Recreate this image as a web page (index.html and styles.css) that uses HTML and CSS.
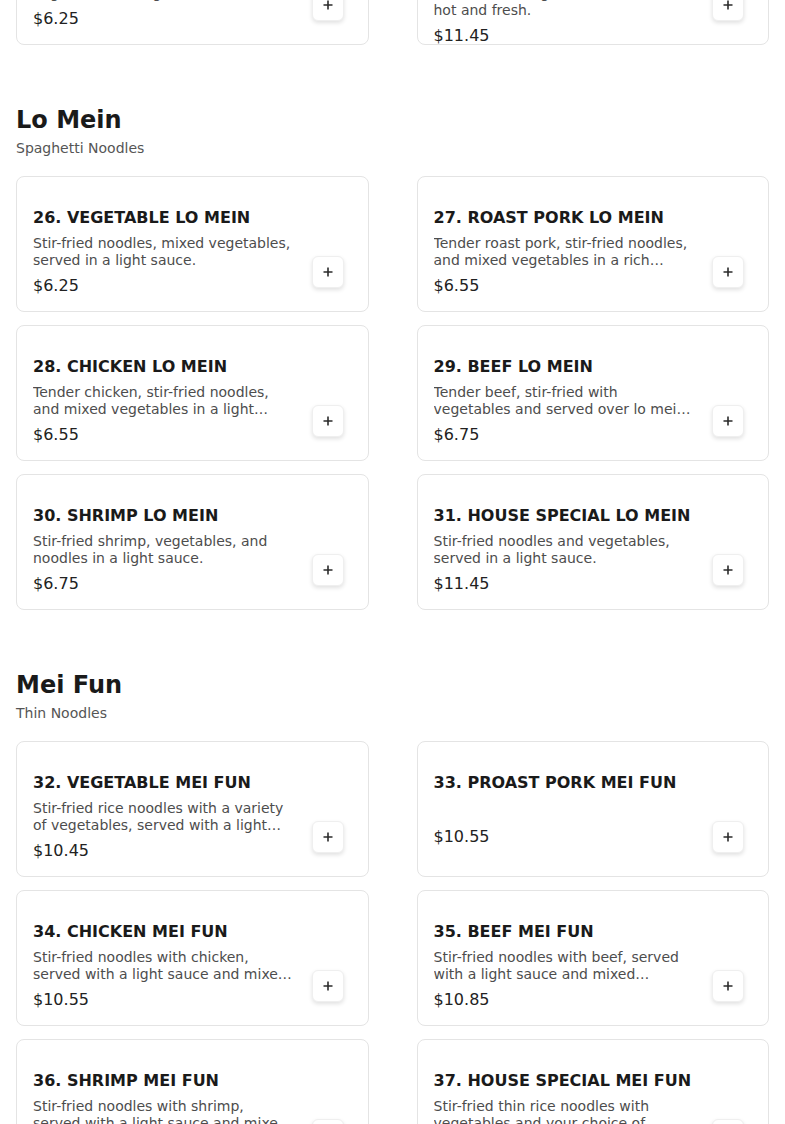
FILE: index.html
```html
<!DOCTYPE html>
<html lang="en">
<head>
<meta charset="utf-8">
<title>Menu</title>
<link rel="stylesheet" href="styles.css">
</head>
<body>
<main class="menu">
  <section class="section section--cut">
    <div class="grid">
      <article class="card">
        <div class="info">
          <h3 class="title">24. VEGETABLE CHOW MEIN</h3>
          <p class="desc">Crispy noodles with mixed vegetables in a light brown sauce.</p>
          <p class="price">$6.25</p>
        </div>
        <button class="add" aria-label="Add"><svg viewBox="0 0 10 10" width="10" height="10"><path d="M5 0.5v9M0.5 5h9" stroke="#2b2b2b" stroke-width="1.6" fill="none"/></svg></button>
      </article>
      <article class="card">
        <div class="info">
          <h3 class="title">25. HOUSE SPECIAL</h3>
          <p class="desc desc--long">Chicken, shrimp and roast pork with noodles and vegetables, all served hot and fresh.</p>
          <p class="price">$11.45</p>
        </div>
        <button class="add" aria-label="Add"><svg viewBox="0 0 10 10" width="10" height="10"><path d="M5 0.5v9M0.5 5h9" stroke="#2b2b2b" stroke-width="1.6" fill="none"/></svg></button>
      </article>
    </div>
  </section>

  <section class="section">
    <h2 class="section-title">Lo Mein</h2>
    <p class="section-sub">Spaghetti Noodles</p>
    <div class="grid">
      <article class="card">
        <div class="info">
          <h3 class="title">26. VEGETABLE LO MEIN</h3>
          <p class="desc">Stir-fried noodles, mixed vegetables, served in a light sauce.</p>
          <p class="price">$6.25</p>
        </div>
        <button class="add" aria-label="Add"><svg viewBox="0 0 10 10" width="10" height="10"><path d="M5 0.5v9M0.5 5h9" stroke="#2b2b2b" stroke-width="1.6" fill="none"/></svg></button>
      </article>
      <article class="card">
        <div class="info">
          <h3 class="title">27. ROAST PORK LO MEIN</h3>
          <p class="desc">Tender roast pork, stir-fried noodles, and mixed vegetables in a rich savory brown sauce.</p>
          <p class="price">$6.55</p>
        </div>
        <button class="add" aria-label="Add"><svg viewBox="0 0 10 10" width="10" height="10"><path d="M5 0.5v9M0.5 5h9" stroke="#2b2b2b" stroke-width="1.6" fill="none"/></svg></button>
      </article>
      <article class="card">
        <div class="info">
          <h3 class="title">28. CHICKEN LO MEIN</h3>
          <p class="desc">Tender chicken, stir-fried noodles, and mixed vegetables in a light sauce.</p>
          <p class="price">$6.55</p>
        </div>
        <button class="add" aria-label="Add"><svg viewBox="0 0 10 10" width="10" height="10"><path d="M5 0.5v9M0.5 5h9" stroke="#2b2b2b" stroke-width="1.6" fill="none"/></svg></button>
      </article>
      <article class="card">
        <div class="info">
          <h3 class="title">29. BEEF LO MEIN</h3>
          <p class="desc">Tender beef, stir-fried with vegetables and served over lo mein noodles.</p>
          <p class="price">$6.75</p>
        </div>
        <button class="add" aria-label="Add"><svg viewBox="0 0 10 10" width="10" height="10"><path d="M5 0.5v9M0.5 5h9" stroke="#2b2b2b" stroke-width="1.6" fill="none"/></svg></button>
      </article>
      <article class="card">
        <div class="info">
          <h3 class="title">30. SHRIMP LO MEIN</h3>
          <p class="desc">Stir-fried shrimp, vegetables, and noodles in a light sauce.</p>
          <p class="price">$6.75</p>
        </div>
        <button class="add" aria-label="Add"><svg viewBox="0 0 10 10" width="10" height="10"><path d="M5 0.5v9M0.5 5h9" stroke="#2b2b2b" stroke-width="1.6" fill="none"/></svg></button>
      </article>
      <article class="card">
        <div class="info">
          <h3 class="title">31. HOUSE SPECIAL LO MEIN</h3>
          <p class="desc">Stir-fried noodles and vegetables, served in a light sauce.</p>
          <p class="price">$11.45</p>
        </div>
        <button class="add" aria-label="Add"><svg viewBox="0 0 10 10" width="10" height="10"><path d="M5 0.5v9M0.5 5h9" stroke="#2b2b2b" stroke-width="1.6" fill="none"/></svg></button>
      </article>
    </div>
  </section>

  <section class="section">
    <h2 class="section-title">Mei Fun</h2>
    <p class="section-sub">Thin Noodles</p>
    <div class="grid">
      <article class="card">
        <div class="info">
          <h3 class="title">32. VEGETABLE MEI FUN</h3>
          <p class="desc">Stir-fried rice noodles with a variety of vegetables, served with a light sauce.</p>
          <p class="price">$10.45</p>
        </div>
        <button class="add" aria-label="Add"><svg viewBox="0 0 10 10" width="10" height="10"><path d="M5 0.5v9M0.5 5h9" stroke="#2b2b2b" stroke-width="1.6" fill="none"/></svg></button>
      </article>
      <article class="card">
        <div class="info">
          <h3 class="title">33. PROAST PORK MEI FUN</h3>
          <p class="desc desc--empty"></p>
          <p class="price">$10.55</p>
        </div>
        <button class="add" aria-label="Add"><svg viewBox="0 0 10 10" width="10" height="10"><path d="M5 0.5v9M0.5 5h9" stroke="#2b2b2b" stroke-width="1.6" fill="none"/></svg></button>
      </article>
      <article class="card">
        <div class="info">
          <h3 class="title">34. CHICKEN MEI FUN</h3>
          <p class="desc">Stir-fried noodles with chicken, served with a light sauce and mixed vegetables.</p>
          <p class="price">$10.55</p>
        </div>
        <button class="add" aria-label="Add"><svg viewBox="0 0 10 10" width="10" height="10"><path d="M5 0.5v9M0.5 5h9" stroke="#2b2b2b" stroke-width="1.6" fill="none"/></svg></button>
      </article>
      <article class="card">
        <div class="info">
          <h3 class="title">35. BEEF MEI FUN</h3>
          <p class="desc">Stir-fried noodles with beef, served with a light sauce and mixed vegetables.</p>
          <p class="price">$10.85</p>
        </div>
        <button class="add" aria-label="Add"><svg viewBox="0 0 10 10" width="10" height="10"><path d="M5 0.5v9M0.5 5h9" stroke="#2b2b2b" stroke-width="1.6" fill="none"/></svg></button>
      </article>
      <article class="card">
        <div class="info">
          <h3 class="title">36. SHRIMP MEI FUN</h3>
          <p class="desc">Stir-fried noodles with shrimp, served with a light sauce and mixed vegetables.</p>
          <p class="price">$10.85</p>
        </div>
        <button class="add" aria-label="Add"><svg viewBox="0 0 10 10" width="10" height="10"><path d="M5 0.5v9M0.5 5h9" stroke="#2b2b2b" stroke-width="1.6" fill="none"/></svg></button>
      </article>
      <article class="card">
        <div class="info">
          <h3 class="title">37. HOUSE SPECIAL MEI FUN</h3>
          <p class="desc">Stir-fried thin rice noodles with vegetables and your choice of chicken, beef or shrimp.</p>
          <p class="price">$12.45</p>
        </div>
        <button class="add" aria-label="Add"><svg viewBox="0 0 10 10" width="10" height="10"><path d="M5 0.5v9M0.5 5h9" stroke="#2b2b2b" stroke-width="1.6" fill="none"/></svg></button>
      </article>
    </div>
  </section>
</main>
</body>
</html>
```

FILE: styles.css
```css
* { box-sizing: border-box; }

html, body {
  margin: 0;
  padding: 0;
  background: #ffffff;
}

body {
  font-family: "DejaVu Sans", "Liberation Sans", sans-serif;
  color: #1a1a1a;
  overflow: hidden;
}

.menu {
  padding: 0 16px;
}

.section {
  padding-top: 59px;
}

.section--cut {
  padding-top: 0;
  margin-top: -91px;
}

.section-title {
  margin: 0;
  font-size: 24px;
  line-height: 32px;
  font-weight: 700;
  color: #1a1a1a;
}

.section-sub {
  margin: 2px 0 0;
  font-size: 14px;
  line-height: 20px;
  color: #555555;
}

.section .section-sub + .grid {
  margin-top: 18px;
}

.grid {
  display: grid;
  grid-template-columns: minmax(0, 1fr) minmax(0, 1fr);
  column-gap: 48px;
  row-gap: 13px;
}

.card {
  display: flex;
  align-items: flex-start;
  gap: 16px;
  height: 136px;
  padding: 29px 24px 0 16px;
  border: 1px solid #e4e4e4;
  border-radius: 8px;
  background: #ffffff;
}

.info {
  flex: 1;
  min-width: 0;
}

.title {
  margin: 0;
  font-size: 16px;
  line-height: 24px;
  font-weight: 700;
  color: #1a1a1a;
  white-space: nowrap;
}

.desc {
  margin: 5px 0 0;
  font-size: 14px;
  line-height: 17px;
  color: #4d4d4d;
  display: -webkit-box;
  -webkit-box-orient: vertical;
  -webkit-line-clamp: 2;
  overflow: hidden;
}

.desc--long {
  -webkit-line-clamp: 3;
}

.desc--empty {
  min-height: 20px;
}

.price {
  margin: 5px 0 0;
  font-size: 16px;
  line-height: 24px;
  color: #222222;
}

.add {
  align-self: flex-end;
  flex: none;
  width: 32px;
  height: 32px;
  margin-bottom: 23px;
  padding: 0;
  display: flex;
  align-items: center;
  justify-content: center;
  background: #ffffff;
  border: 1px solid #efefef;
  border-radius: 6px;
  box-shadow: 0 2px 4px rgba(0, 0, 0, 0.12);
  cursor: pointer;
}
```
